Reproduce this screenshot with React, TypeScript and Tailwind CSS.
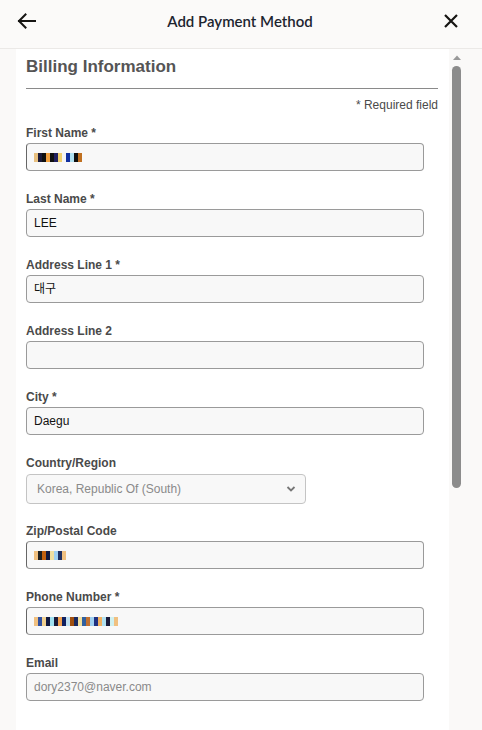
const mosaics: Record<string, string[]> = {
  first: ['#e8c080', '#1a1a3a', '#101010', '#f0a040', '#101010', '#202060', '#f0d070', '#f5f5f5', '#1030a0', '#b0e0f0', '#101010', '#c07020'],
  zip: ['#f0c080', '#202020', '#c06010', '#101840', '#f0e0a0', '#a0d0f0', '#203060', '#f0c080'],
  phone: ['#f0c080', '#3050a0', '#f0d090', '#101840', '#a0e0f0', '#1a1a3a', '#f0a050', '#102060', '#c0e0f0', '#a05010', '#1a2a60', '#f0e0a0', '#3060a0', '#c07030', '#a0d0f0', '#203080', '#f0b060', '#b0e0f0', '#1a1a3a', '#d0f0f0', '#f0c080'],
}

function Mosaic({ colors }: { colors: string[] }) {
  return (
    <span className="inline-flex h-[9px] items-stretch">
      {colors.map((c, i) => (
        <span key={i} className="w-[4px] h-full" style={{ background: c }} />
      ))}
    </span>
  )
}

interface FieldProps {
  label: string
  value?: string
  mosaic?: string
  muted?: boolean
}

function Field({ label, value, mosaic, muted }: FieldProps) {
  return (
    <div className="mb-[21px]">
      <div className="h-[14px] leading-[14px] text-[12px] font-bold text-[#4a4a4a] mb-[3px]">{label}</div>
      <div
        className={`w-[398px] h-[28px] rounded-[4px] border border-[#9a9a9a] bg-[#f8f8f8] flex items-center px-[7px] text-[12px] ${
          muted ? 'text-[#8a8a8a]' : 'text-[#111]'
        } ${mosaic ? 'border-l-[#666]' : ''}`}
      >
        {mosaic ? <Mosaic colors={mosaics[mosaic]} /> : value}
      </div>
    </div>
  )
}

export default function App() {
  return (
    <div
      className="w-[482px] h-[730px] overflow-hidden bg-[#faf9f8] flex flex-col"
      style={{ fontFamily: '"Liberation Sans", Arial, "Noto Sans CJK KR", sans-serif' }}
    >
      {/* Header */}
      <header className="h-[49px] shrink-0 border-b border-[#ebe9e7] flex items-center justify-between px-[16px] pb-[6px] bg-[#fbfaf9]">
        <svg width="22" height="22" viewBox="0 0 22 22" fill="none" stroke="#161513" strokeWidth="2" strokeLinecap="square">
          <path d="M3 11 H19" />
          <path d="M9.5 4.5 L3 11 L9.5 17.5" />
        </svg>
        <span className="text-[15px] font-semibold text-[#1d2530]" style={{ fontFamily: 'Lato, "Noto Sans", sans-serif' }}>
          Add Payment Method
        </span>
        <svg width="18" height="18" viewBox="0 0 18 18" fill="none" stroke="#161513" strokeWidth="2.2" className="mr-[6px]">
          <path d="M3 3 L15 15 M15 3 L3 15" />
        </svg>
      </header>

      <div className="flex flex-1 min-h-0">
        <div className="w-[16px] shrink-0" />

        {/* Panel */}
        <main className="w-[433px] bg-white px-[10px] pt-[8px]">
          <h2 className="w-[412px] text-[17px] leading-[20px] font-bold text-[#555] pb-[11px] border-b border-[#8a8a8a]">
            Billing Information
          </h2>
          <div className="w-[412px] text-right text-[12px] leading-[14px] text-[#4a4a4a] mt-[9px] mb-[14px]">* Required field</div>

          <Field label="First Name *" mosaic="first" />
          <Field label="Last Name *" value="LEE" />
          <Field label="Address Line 1 *" value="대구" />
          <Field label="Address Line 2" value="" />
          <Field label="City *" value="Daegu" />

          <div className="mb-[20px]">
            <div className="h-[14px] leading-[14px] text-[12px] font-bold text-[#4a4a4a] mb-[4px]">Country/Region</div>
            <div className="w-[280px] h-[30px] rounded-[4px] border border-[#c4c4c4] bg-[#f8f8f8] flex items-center justify-between pl-[10px] pr-[9px] text-[12px] text-[#8a8a8a]">
              <span>Korea, Republic Of (South)</span>
              <svg width="10" height="8" viewBox="0 0 10 8" fill="none" stroke="#777" strokeWidth="1.8">
                <path d="M1.5 2 L5 5.5 L8.5 2" />
              </svg>
            </div>
          </div>

          <Field label="Zip/Postal Code" mosaic="zip" />
          <Field label="Phone Number *" mosaic="phone" />
          <Field label="Email" value="dory2370@naver.com" muted />
        </main>

        {/* Scrollbar */}
        <div className="w-[16px] shrink-0 flex flex-col items-center pt-[6px]">
          <svg width="8" height="5" viewBox="0 0 8 5">
            <path d="M0 5 L4 0.5 L8 5 Z" fill="#999" />
          </svg>
          <div className="w-[9px] h-[422px] rounded-full bg-[#8c8c8c] mt-[6px] ml-[-1px]" />
        </div>
      </div>
    </div>
  )
}
